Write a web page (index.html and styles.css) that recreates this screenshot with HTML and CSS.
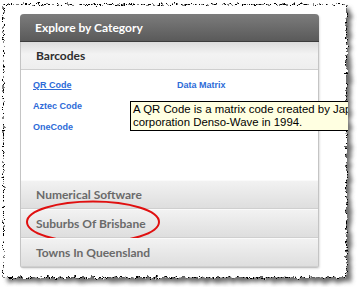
FILE: index.html
```html
<!DOCTYPE html>
<html lang="en">
<head>
    <meta charset="UTF-8">
    <meta name="viewport" content="width=device-width, initial-scale=1.0">
    <title>Explore by Category</title>
    <link rel="stylesheet" href="styles.css">
</head>
<body>
    <div class="page">
        <!-- torn paper edge round the capture -->
        <svg class="torn" width="359" height="287" viewBox="0 0 359 287">
            <defs>
                <filter id="rough" x="-5%" y="-5%" width="110%" height="110%">
                    <feTurbulence type="fractalNoise" baseFrequency="0.22" numOctaves="3" seed="7" result="noise"/>
                    <feDisplacementMap in="SourceGraphic" in2="noise" scale="6" xChannelSelector="R" yChannelSelector="G"/>
                </filter>
                <filter id="soft" x="-5%" y="-5%" width="115%" height="115%">
                    <feTurbulence type="fractalNoise" baseFrequency="0.22" numOctaves="3" seed="7" result="noise"/>
                    <feDisplacementMap in="SourceGraphic" in2="noise" scale="6" xChannelSelector="R" yChannelSelector="G" result="moved"/>
                    <feGaussianBlur in="moved" stdDeviation="2.2"/>
                </filter>
            </defs>
            <rect x="8" y="9" width="343" height="273" fill="#6e6e6e" filter="url(#soft)"/>
            <rect x="3.5" y="4.5" width="343" height="273" fill="#fff" stroke="#000" stroke-width="1" stroke-dasharray="1.5 1" filter="url(#rough)"/>
        </svg>

        <div class="sheet">
            <div class="panel">
                <div class="panel-head">Explore by Category</div>

                <div class="cat cat-open">Barcodes</div>
                <div class="cat-body">
                    <div class="links">
                        <a href="#" class="link-hover">QR Code</a>
                        <a href="#">Data Matrix</a>
                        <a href="#">Aztec Code</a>
                        <span></span>
                        <a href="#">OneCode</a>
                    </div>
                </div>

                <div class="cat">Numerical Software</div>
                <div class="cat cat-marked">
                    Suburbs Of Brisbane
                    <!-- hand drawn marker -->
                    <svg class="marker" width="138" height="46" viewBox="0 0 138 46">
                        <ellipse cx="69" cy="23" rx="66" ry="20.5" fill="none" stroke="#e01010" stroke-width="2"/>
                    </svg>
                </div>
                <div class="cat">Towns In Queensland</div>
            </div>

            <div class="tooltip">A QR Code is a matrix code created by Japanese<br>corporation Denso-Wave in 1994.</div>
        </div>
    </div>
</body>
</html>
```

FILE: styles.css
```css
body {
    margin: 0;
    background: #fff;
    font-family: 'Lato', 'Liberation Sans', sans-serif;
}

.page {
    position: relative;
    width: 359px;
    height: 287px;
    overflow: hidden;
}

.torn {
    position: absolute;
    left: 0;
    top: 0;
    z-index: 0;
}

.sheet {
    position: relative;
    z-index: 1;
    margin: 5px 0 0 4px;
    width: 344px;
    height: 270px;
    padding: 9px 0 0 16px;
    box-sizing: border-box;
    overflow: hidden;
}

.panel {
    width: 299px;
    background: #fff;
    border: 1px solid #c4c4c4;
    border-top: none;
    border-radius: 4px 4px 3px 3px;
    box-shadow: 1px 1px 2px rgba(0,0,0,0.12);
    box-sizing: border-box;
}

.panel-head {
    height: 27px;
    line-height: 27px;
    padding-left: 15px;
    background: linear-gradient(#7c7c7c, #5a5a5a);
    border-bottom: 1px solid #3c3c3c;
    border-radius: 4px 4px 0 0;
    margin: 0 -1px;
    color: #fff;
    font-weight: bold;
    font-size: 12px;
}

.cat {
    position: relative;
    height: 27px;
    line-height: 27px;
    padding-left: 15px;
    background: linear-gradient(#f2f2f2, #dedede);
    border-top: 1px solid #fafafa;
    border-bottom: 1px solid #cfcfcf;
    color: #6a6a6a;
    font-weight: bold;
    font-size: 12px;
}

.cat-open {
    background: linear-gradient(#dcdcdc, #f3f3f3 45%, #eeeeee);
    border-top: none;
    height: 27px;
    color: #2e2e2e;
}

.cat-body {
    height: 110px;
    padding: 8px 0 0 12px;
    box-sizing: border-box;
}

.links {
    display: grid;
    grid-template-columns: 144px 120px;
    row-gap: 7px;
}

.links a {
    color: #2d6bd8;
    font-family: 'Liberation Sans', sans-serif;
    font-weight: bold;
    font-size: 9px;
    line-height: 14px;
    text-decoration: none;
}

.links a.link-hover {
    text-decoration: underline;
}

.marker {
    position: absolute;
    left: 3px;
    top: -11px;
}

.tooltip {
    position: absolute;
    left: 126px;
    top: 96px;
    width: 240px;
    height: 26px;
    padding: 1px 2px;
    background: #ffffe1;
    border: 1px solid #000;
    color: #000;
    font-family: 'Liberation Sans', sans-serif;
    font-size: 11.4px;
    line-height: 13px;
    white-space: nowrap;
}
```
